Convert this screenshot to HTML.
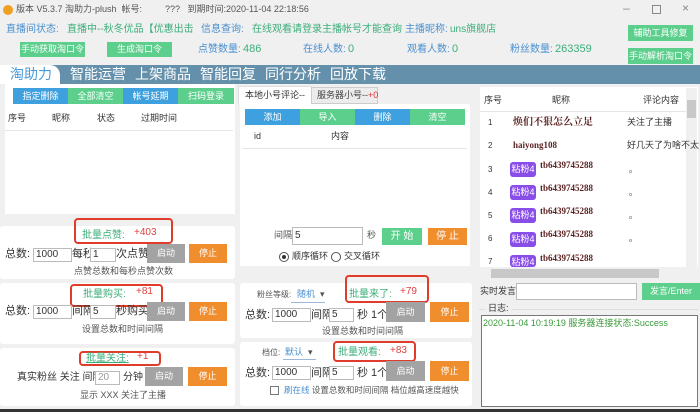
<!DOCTYPE html>
<html><head><meta charset="utf-8">
<style>
*{margin:0;padding:0;box-sizing:border-box}
body{width:700px;height:412px;overflow:hidden;background:#f0f0f0;font-family:"Liberation Sans","Noto Sans CJK SC",sans-serif;font-size:10px;color:#333;position:relative}
.a{position:absolute;white-space:nowrap;line-height:1.1}
.bl{color:#4a90d0}.gr{color:#3cae7a}
.btn{position:absolute;color:#fff;text-align:center;font-size:9px}
.g{background:#5ccf8c}.b{background:#3fa0df}.o{background:#f08e2e}.gy{background:#a3a3a3}
.card{position:absolute;background:#fff;border-radius:3px}
.inp{position:absolute;background:#fff;border:1px solid #bbb;height:14px;font-size:10px;line-height:12px;padding-left:2px}
.red{position:absolute;border:2px solid #e03c2c;border-radius:4px}
.tab{position:absolute;color:#fff;font-size:14px;top:65px;line-height:19px}
.cap{position:absolute;font-size:9px;color:#555;white-space:nowrap;line-height:1.1}
.tag{position:absolute;background:#8a4ee8;color:#fff;font-size:9px;border-radius:3px;width:26px;height:15px;line-height:15px;text-align:center}
.nick{position:absolute;font-family:"Liberation Serif","Noto Serif CJK SC",serif;color:#5a1f1f;font-weight:bold;font-size:9px;white-space:nowrap;line-height:1.1}
</style></head><body>
<div class="a" style="left:3px;top:5px;width:10px;height:10px;border-radius:50%;background:#f0a020"></div>
<div class="a" style="left:16px;top:5px;font-size:9px;color:#555">版本 V5.3.7 淘助力-plush &nbsp;帐号:</div>
<div class="a" style="left:165px;top:5px;font-size:9px;color:#555">???&nbsp;&nbsp; 到期时间:2020-11-04 22:18:56</div>
<div class="a" style="left:623px;top:2px;font-size:12px;color:#888">–</div>
<div class="a" style="left:652px;top:5px;width:9px;height:9px;border:1px solid #888"></div>
<div class="a" style="left:682px;top:2px;font-size:12px;color:#888">×</div>
<div class="a bl" style="left:6px;top:24px">直播间状态:</div>
<div class="a gr" style="left:67px;top:24px">直播中--秋冬优品【优惠出击</div>
<div class="a bl" style="left:201px;top:24px">信息查询:</div>
<div class="a gr" style="left:252px;top:24px">在线观看请登录主播帐号才能查询</div>
<div class="a bl" style="left:405px;top:24px">主播昵称:</div>
<div class="a gr" style="left:450px;top:24px">uns旗舰店</div>
<div class="btn g" style="left:628px;top:25px;width:65px;height:16px;line-height:16px">辅助工具修复</div>
<div class="btn g" style="left:628px;top:48px;width:65px;height:16px;line-height:16px">手动解析淘口令</div>
<div class="btn g" style="left:20px;top:42px;width:65px;height:15px;line-height:15px">手动获取淘口令</div>
<div class="btn g" style="left:107px;top:42px;width:65px;height:15px;line-height:15px">生成淘口令</div>
<div class="a bl" style="left:198px;top:44px">点赞数量:</div><div class="a gr" style="left:243px;top:43px;font-size:11px">486</div>
<div class="a bl" style="left:303px;top:44px">在线人数:</div><div class="a gr" style="left:348px;top:43px;font-size:11px">0</div>
<div class="a bl" style="left:407px;top:44px">观看人数:</div><div class="a gr" style="left:452px;top:43px;font-size:11px">0</div>
<div class="a bl" style="left:510px;top:44px">粉丝数量:</div><div class="a gr" style="left:555px;top:43px;font-size:11px">263359</div>
<div class="a" style="left:0;top:65px;width:700px;height:19px;background:#6590ab"></div>
<div class="a" style="left:0;top:65px;width:60px;height:19px;background:#fff;border-radius:0 10px 0 0"></div>
<div class="tab" style="left:10px;color:#4a9ad8">淘助力</div>
<div class="tab" style="left:70px">智能运营</div>
<div class="tab" style="left:135px">上架商品</div>
<div class="tab" style="left:200px">智能回复</div>
<div class="tab" style="left:265px">同行分析</div>
<div class="tab" style="left:330px">回放下载</div>
<div class="card" style="left:5px;top:84px;width:230px;height:130px;border-radius:0"></div>
<div class="btn b" style="left:13px;top:88px;width:55px;height:16px;line-height:16px">指定删除</div>
<div class="btn g" style="left:68px;top:88px;width:55px;height:16px;line-height:16px">全部清空</div>
<div class="btn b" style="left:123px;top:88px;width:55px;height:16px;line-height:16px">帐号延期</div>
<div class="btn g" style="left:178px;top:88px;width:56px;height:16px;line-height:16px">扫码登录</div>
<div class="a" style="left:8px;top:114px;font-size:9px">序号</div>
<div class="a" style="left:52px;top:114px;font-size:9px">昵称</div>
<div class="a" style="left:97px;top:114px;font-size:9px">状态</div>
<div class="a" style="left:141px;top:114px;font-size:9px">过期时间</div>
<div class="a" style="left:5px;top:130px;width:228px;height:1px;background:#e6e6e6"></div>
<div class="card" style="left:0;top:226px;width:235px;height:53px"></div>
<div class="red" style="left:74px;top:218px;width:99px;height:26px"></div>
<div class="a gr" style="left:82px;top:230px">批量点赞:</div><div class="a" style="left:134px;top:227px;color:#e04040">+403</div>
<div class="a" style="left:5px;top:248px;font-size:11px">总数:</div>
<div class="inp" style="left:33px;top:248px;width:39px">1000</div>
<div class="a" style="left:72px;top:248px;font-size:11px">每秒</div>
<div class="inp" style="left:90px;top:248px;width:26px">1</div>
<div class="a" style="left:116px;top:248px;font-size:11px">次点赞</div>
<div class="btn gy" style="left:147px;top:244px;width:38px;height:19px;line-height:19px">启动</div>
<div class="btn o" style="left:189px;top:244px;width:38px;height:19px;line-height:19px">停止</div>
<div class="cap" style="left:74px;top:267px">点赞总数和每秒点赞次数</div>
<div class="card" style="left:0;top:283px;width:235px;height:61px"></div>
<div class="red" style="left:70px;top:284px;width:93px;height:23px"></div>
<div class="a gr" style="left:83px;top:289px">批量购买:</div><div class="a" style="left:136px;top:286px;color:#e04040">+81</div>
<div class="a" style="left:5px;top:305px;font-size:11px">总数:</div>
<div class="inp" style="left:33px;top:305px;width:39px">1000</div>
<div class="a" style="left:72px;top:305px;font-size:11px">间隔</div>
<div class="inp" style="left:90px;top:305px;width:26px">5</div>
<div class="a" style="left:116px;top:305px;font-size:11px">秒购买</div>
<div class="btn gy" style="left:147px;top:302px;width:38px;height:19px;line-height:19px">启动</div>
<div class="btn o" style="left:189px;top:302px;width:38px;height:19px;line-height:19px">停止</div>
<div class="cap" style="left:82px;top:325px">设置总数和时间间隔</div>
<div class="card" style="left:0;top:348px;width:235px;height:58px"></div>
<div class="red" style="left:79px;top:351px;width:82px;height:15px"></div>
<div class="a gr" style="left:86px;top:353px;text-decoration:underline">批量关注:</div><div class="a" style="left:137px;top:351px;color:#e04040">+1</div>
<div class="a" style="left:17px;top:372px;font-size:10px">真实粉丝 关注 间隔</div>
<div class="inp" style="left:95px;top:371px;width:25px;color:#999">20</div>
<div class="a" style="left:123px;top:372px;font-size:10px">分钟</div>
<div class="btn gy" style="left:145px;top:367px;width:38px;height:19px;line-height:19px">启动</div>
<div class="btn o" style="left:188px;top:367px;width:39px;height:19px;line-height:19px">停止</div>
<div class="cap" style="left:80px;top:391px">显示 XXX 关注了主播</div>
<div class="a" style="left:238px;top:86px;width:74px;height:19px;background:#fff;border:1px solid #ddd;border-bottom:none;font-size:9px;line-height:17px;padding-left:6px">本地小号评论--</div>
<div class="a" style="left:311px;top:87px;width:67px;height:17px;background:#ececec;border:1px solid #ccc;font-size:9px;line-height:15px;padding-left:5px;color:#444">服务器小号--<span style="color:#e03030">+0</span></div>
<div class="card" style="left:240px;top:104px;width:230px;height:162px;border-radius:0"></div>
<div class="btn b" style="left:245px;top:109px;width:55px;height:16px;line-height:16px">添加</div>
<div class="btn g" style="left:300px;top:109px;width:55px;height:16px;line-height:16px">导入</div>
<div class="btn b" style="left:355px;top:109px;width:55px;height:16px;line-height:16px">删除</div>
<div class="btn g" style="left:410px;top:109px;width:55px;height:16px;line-height:16px">清空</div>
<div class="a" style="left:254px;top:132px;font-size:9px">id</div>
<div class="a" style="left:331px;top:132px;font-size:9px">内容</div>
<div class="a" style="left:242px;top:148px;width:225px;height:1px;background:#e6e6e6"></div>
<div class="a" style="left:274px;top:231px;font-size:9px;color:#555">间隔</div>
<div class="inp" style="left:292px;top:227px;width:71px;height:18px;line-height:16px">5</div>
<div class="a" style="left:367px;top:231px;font-size:9px;color:#555">秒</div>
<div class="btn g" style="left:382px;top:228px;width:40px;height:17px;line-height:17px;font-size:10px">开 始</div>
<div class="btn o" style="left:428px;top:228px;width:39px;height:17px;line-height:17px;font-size:10px">停 止</div>
<div class="a" style="left:279px;top:252px;width:10px;height:10px;border:1px solid #555;border-radius:50%"><div style="margin:2px;width:4px;height:4px;border-radius:50%;background:#333"></div></div>
<div class="a" style="left:292px;top:252px;font-size:9px">顺序循环</div>
<div class="a" style="left:331px;top:252px;width:10px;height:10px;border:1px solid #555;border-radius:50%"></div>
<div class="a" style="left:344px;top:252px;font-size:9px">交叉循环</div>
<div class="card" style="left:240px;top:283px;width:232px;height:55px"></div>
<div class="red" style="left:345px;top:275px;width:84px;height:28px"></div>
<div class="a" style="left:257px;top:291px;font-size:8px;color:#555">粉丝等级:</div>
<div class="a bl" style="left:297px;top:290px;font-size:9px">随机 &nbsp;<span style="color:#555">▾</span></div>
<div class="a" style="left:291px;top:302px;width:34px;height:1px;background:#9bb8d8"></div>
<div class="a gr" style="left:349px;top:289px">批量来了:</div><div class="a" style="left:400px;top:286px;color:#e04040">+79</div>
<div class="a" style="left:245px;top:309px;font-size:11px">总数:</div>
<div class="inp" style="left:272px;top:308px;width:39px">1000</div>
<div class="a" style="left:311px;top:309px;font-size:11px">间隔</div>
<div class="inp" style="left:329px;top:308px;width:25px">5</div>
<div class="a" style="left:357px;top:309px;font-size:11px">秒 1个</div>
<div class="btn gy" style="left:386px;top:302px;width:39px;height:20px;line-height:20px">启动</div>
<div class="btn o" style="left:430px;top:302px;width:39px;height:20px;line-height:20px">停止</div>
<div class="cap" style="left:322px;top:327px">设置总数和时间间隔</div>
<div class="card" style="left:240px;top:342px;width:232px;height:64px"></div>
<div class="red" style="left:333px;top:341px;width:83px;height:21px"></div>
<div class="a" style="left:262px;top:349px;font-size:8px;color:#555">档位:</div>
<div class="a bl" style="left:285px;top:348px;font-size:9px">默认 &nbsp;<span style="color:#555">▾</span></div>
<div class="a" style="left:283px;top:359px;width:33px;height:1px;background:#9bb8d8"></div>
<div class="a gr" style="left:338px;top:347px">批量观看:</div><div class="a" style="left:390px;top:345px;color:#e04040">+83</div>
<div class="a" style="left:245px;top:367px;font-size:11px">总数:</div>
<div class="inp" style="left:272px;top:366px;width:39px">1000</div>
<div class="a" style="left:311px;top:367px;font-size:11px">间隔</div>
<div class="inp" style="left:329px;top:366px;width:25px">5</div>
<div class="a" style="left:357px;top:367px;font-size:11px">秒 1个</div>
<div class="btn gy" style="left:386px;top:361px;width:39px;height:20px;line-height:20px">启动</div>
<div class="btn o" style="left:430px;top:361px;width:39px;height:20px;line-height:20px">停止</div>
<div class="a" style="left:270px;top:386px;width:9px;height:9px;border:1px solid #777"></div>
<div class="a" style="left:284px;top:386px;font-size:8.5px;color:#555"><span style="color:#4a90d0">刷在线</span> 设置总数和时间间隔 档位越高速度越快</div>
<div class="card" style="left:480px;top:87px;width:218px;height:180px;border-radius:0"></div>
<div class="a" style="left:484px;top:96px;font-size:9px">序号</div>
<div class="a" style="left:552px;top:96px;font-size:9px">昵称</div>
<div class="a" style="left:643px;top:96px;font-size:9px">评论内容</div>
<div class="a" style="left:480px;top:111px;width:206px;height:1px;background:#e6e6e6"></div>
<div class="a" style="left:686px;top:88px;width:11px;height:180px;background:#f0f0f0"></div>
<div class="a" style="left:687px;top:100px;width:9px;height:18px;background:#c8c8c8"></div>
<div class="a" style="left:480px;top:268px;width:205px;height:11px;background:#f0f0f0"></div>
<div class="a" style="left:491px;top:269px;width:168px;height:9px;background:#c8c8c8"></div>
<div class="a" style="left:488px;top:119px;font-size:8px">1</div><div class="nick" style="left:513px;top:117px;font-size:10px">焕们不狠怎么立足</div><div class="a" style="left:627px;top:118px;font-size:9px">关注了主播</div>
<div class="a" style="left:488px;top:142px;font-size:8px">2</div><div class="nick" style="left:513px;top:141px">haiyong108</div><div class="a" style="left:627px;top:141px;font-size:9px">好几天了为啥不太</div>
<div class="a" style="left:488px;top:166px;font-size:8px">3</div><div class="tag" style="left:510px;top:162px">粘粉4</div><div class="nick" style="left:540px;top:161px">tb6439745288</div><div class="a" style="left:629px;top:166px;font-size:8px">。</div>
<div class="a" style="left:488px;top:189px;font-size:8px">4</div><div class="tag" style="left:510px;top:185px">粘粉4</div><div class="nick" style="left:540px;top:184px">tb6439745288</div><div class="a" style="left:629px;top:189px;font-size:8px">。</div>
<div class="a" style="left:488px;top:212px;font-size:8px">5</div><div class="tag" style="left:510px;top:208px">粘粉4</div><div class="nick" style="left:540px;top:207px">tb6439745288</div><div class="a" style="left:629px;top:212px;font-size:8px">。</div>
<div class="a" style="left:488px;top:235px;font-size:8px">6</div><div class="tag" style="left:510px;top:232px">粘粉4</div><div class="nick" style="left:540px;top:230px">tb6439745288</div><div class="a" style="left:629px;top:235px;font-size:8px">。</div>
<div class="a" style="left:488px;top:258px;font-size:8px">7</div><div class="tag" style="left:510px;top:255px;height:12px">粘粉4</div><div class="nick" style="left:540px;top:254px">tb6439745288</div>
<div class="a" style="left:480px;top:287px;font-size:9px">实时发言:</div>
<div class="a" style="left:516px;top:283px;width:121px;height:17px;background:#fff;border:1px solid #bbb"></div>
<div class="btn g" style="left:642px;top:283px;width:58px;height:17px;line-height:17px;font-size:9px">发言/Enter</div>
<div class="a" style="left:479px;top:309px;width:219px;height:1px;background:#ddd"></div>
<div class="a" style="left:485px;top:304px;font-size:9px;background:#f0f0f0;padding:0 3px">日志:</div>
<div class="a" style="left:481px;top:315px;width:217px;height:92px;background:#fff;border:1px solid #777"></div>
<div class="a" style="left:483px;top:319px;font-size:9px;color:#3a9a3a">2020-11-04 10:19:19 服务器连接状态:Success</div>
<div class="a" style="left:0;top:409px;width:700px;height:3px;background:#333"></div>
</body></html>
